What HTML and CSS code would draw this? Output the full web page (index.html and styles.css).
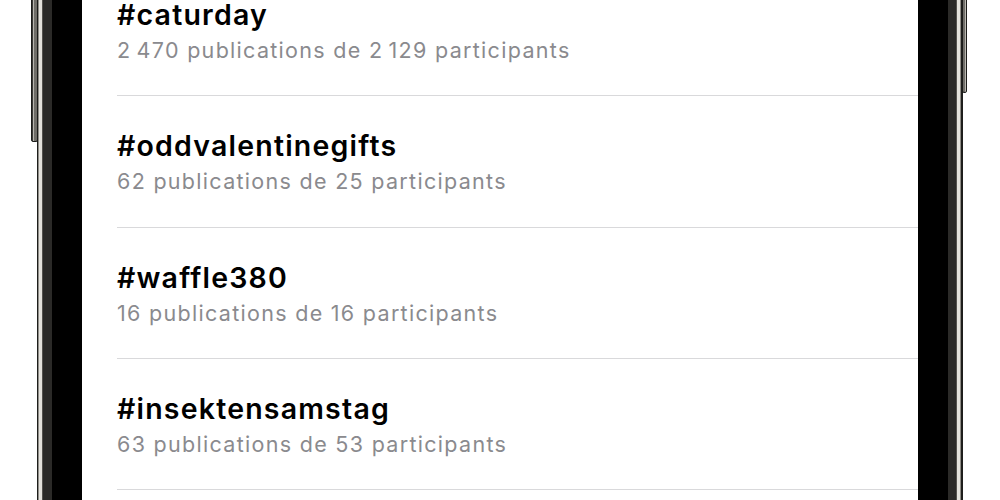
FILE: index.html
```html
<!DOCTYPE html>
<html lang="fr">
  <head>
    <meta charset="UTF-8" />
    <meta name="viewport" content="width=device-width, initial-scale=1.0" />
    <title>Hashtags</title>
    <link rel="stylesheet" href="styles.css">
  </head>

  <body>
    <div class="device">
      <span class="side-button left-button"></span>
      <div class="bezel bezel-left"></div>

      <div class="screen">
        <ul class="tags">
          <li class="tag">
            <h3>#caturday</h3>
            <p>2&#8239;470 publications de 2&#8239;129 participants</p>
          </li>
          <li class="tag">
            <h3>#oddvalentinegifts</h3>
            <p>62 publications de 25 participants</p>
          </li>
          <li class="tag">
            <h3>#waffle380</h3>
            <p>16 publications de 16 participants</p>
          </li>
          <li class="tag">
            <h3>#insektensamstag</h3>
            <p>63 publications de 53 participants</p>
          </li>
        </ul>
      </div>

      <div class="bezel bezel-right"></div>
      <span class="side-button right-button"></span>
    </div>
  </body>
</html>
```

FILE: styles.css
```css
* {
  margin: 0;
  padding: 0;
  box-sizing: border-box;
}

body {
  height: 500px;
  overflow: hidden;
  background: #fff;
  font-family: Inter, "Noto Sans", sans-serif;
}

.device {
  position: relative;
  display: flex;
  height: 500px;
  width: 926px;
  margin-left: 37px;
}

.bezel {
  width: 45px;
  flex-shrink: 0;
}

.bezel-left {
  background: linear-gradient(
    to right,
    #1e1e1c 0 1px,
    #8f8d87 1px 2px,
    #e4e2dc 2px 5px,
    #55534f 5px 6px,
    #2b2a28 6px 15px,
    #000 15px
  );
}

.bezel-right {
  background: linear-gradient(
    to right,
    #000 0 30px,
    #2b2a28 30px 38px,
    #55534f 38px 39px,
    #e4e2dc 39px 42px,
    #8f8d87 42px 43px,
    #1e1e1c 43px 45px
  );
}

/* hardware buttons sit over the frame edge */
.side-button {
  position: absolute;
  top: -10px;
  border-radius: 2px;
  border: 1px solid #1c1c1a;
}

.left-button {
  left: -6px;
  width: 7px;
  height: 152px;
  background: linear-gradient(to right, #3a3936 0 1px, #b9b7b0 1px 2px, #6f6d68 2px);
}

.right-button {
  right: -4px;
  width: 5px;
  height: 103px;
  background: linear-gradient(to right, #6f6d68 0 2px, #b9b7b0 2px 3px, #3a3936 3px);
}

.screen {
  flex: 1;
  background: #fff;
  overflow: hidden;
}

.tags {
  list-style: none;
  margin-top: -35px;
  padding-left: 35px;
}

.tag {
  padding: 33px 0 32.33px;
  border-bottom: 1px solid #d9d9db;
}

.tag h3 {
  font-size: 28.5px;
  line-height: 34px;
  font-weight: 600;
  letter-spacing: 1.2px;
  color: #000;
}

.tag p {
  margin-top: 5px;
  font-size: 21.5px;
  line-height: 26px;
  letter-spacing: 1.3px;
  color: #8a8a8e;
}
```
